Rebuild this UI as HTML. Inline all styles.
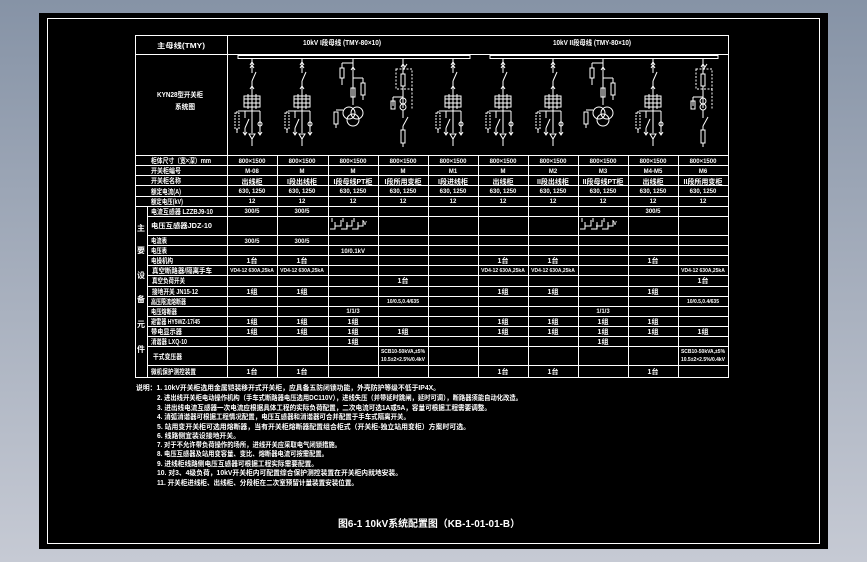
<!DOCTYPE html>
<html><head><meta charset="utf-8"><style>
html,body{margin:0;padding:0;width:867px;height:562px;overflow:hidden;background:linear-gradient(#8693a6,#c6cad4);}
svg{display:block}
text{font-family:"Liberation Sans","Noto Sans CJK SC",sans-serif;fill:#fff;font-weight:bold}
</style></head><body>
<svg width="867" height="562" viewBox="0 0 867 562" xmlns="http://www.w3.org/2000/svg">
<defs>
<g id="feeder" stroke="#fff" stroke-width="1" fill="none">
<line x1="0" y1="58" x2="0" y2="73"/>
<polyline points="-2,65 0,62 2,65"/>
<polyline points="-2,68 0,65 2,68"/>
<line x1="0" y1="81" x2="4" y2="72"/>
<line x1="0" y1="81" x2="0" y2="111"/>
<polyline points="-2,89 0,86 2,89"/>
<rect x="-8" y="96" width="16" height="11"/>
<line x1="-8" y1="99" x2="8" y2="99"/><line x1="-8" y1="103" x2="8" y2="103"/>
<line x1="-4" y1="94" x2="-4" y2="109"/><line x1="4" y1="94" x2="4" y2="109"/>
<line x1="-14" y1="111" x2="8" y2="111"/>
<rect x="-17" y="113" width="4" height="16" stroke-dasharray="2,1"/>
<line x1="-15" y1="111" x2="-15" y2="113"/>
<line x1="-7" y1="111" x2="-7" y2="118"/><line x1="-7" y1="128" x2="-3" y2="119"/><line x1="-7" y1="128" x2="-7" y2="134"/>
<polyline points="-9,132 -7,135 -5,132"/>
<line x1="8" y1="111" x2="8" y2="135"/><circle cx="8" cy="124" r="2"/>
<polyline points="6,132 8,135 10,132"/>
<line x1="0" y1="111" x2="0" y2="133"/>
<polygon points="-3,134 3,134 0,139"/>
<line x1="0" y1="139" x2="0" y2="146"/>
<polyline points="-15,129 -15,133"/>
</g>
<g id="pt" stroke="#fff" stroke-width="1" fill="none">
<line x1="0" y1="58" x2="0" y2="105"/>
<polyline points="-2,70 0,67 2,70"/>
<line x1="0" y1="63" x2="-11" y2="63"/><line x1="-11" y1="63" x2="-11" y2="68"/>
<rect x="-13" y="68" width="4" height="10"/><line x1="-11" y1="78" x2="-11" y2="85"/>
<line x1="0" y1="78" x2="10" y2="78"/><line x1="10" y1="78" x2="10" y2="83"/>
<rect x="8" y="83" width="4" height="12"/><line x1="10" y1="95" x2="10" y2="100"/>
<rect x="-2" y="88" width="4" height="9"/>
<circle cx="-4" cy="113" r="6"/><circle cx="4" cy="113" r="6"/><circle cx="0" cy="120" r="6"/>
<line x1="-10" y1="110" x2="-17" y2="110"/><rect x="-19" y="112" width="4" height="12"/><line x1="-17" y1="124" x2="-17" y2="128"/>
</g>
<g id="fuse" stroke="#fff" stroke-width="1" fill="none">
<line x1="0" y1="58" x2="0" y2="108"/>
<polyline points="-2,67 0,64 2,67"/>
<line x1="0" y1="70" x2="4" y2="64"/>
<rect x="-7" y="69" width="16" height="20" stroke-dasharray="2,1.5"/>
<rect x="-2" y="74" width="4" height="12" fill="#000"/>
<line x1="-10" y1="97" x2="0" y2="97"/><line x1="-10" y1="97" x2="-10" y2="106"/>
<rect x="-12" y="101" width="4" height="8"/>
<circle cx="0" cy="101" r="3"/><circle cx="0" cy="107" r="3"/>
<line x1="9" y1="89" x2="9" y2="110" stroke-dasharray="2,1.5"/>
<line x1="0" y1="110" x2="0" y2="118"/>
<line x1="0" y1="126" x2="5" y2="117"/>
<line x1="0" y1="126" x2="0" y2="130"/>
<rect x="-2" y="130" width="4" height="13"/>
<line x1="0" y1="143" x2="0" y2="147"/>
</g>
</defs>
<rect x="39" y="13" width="789" height="536" fill="#000"/>
<rect x="47.5" y="18.5" width="772" height="525" fill="none" stroke="#fff" stroke-width="1"/>
<g stroke="#fff" stroke-width="1" fill="none">
<rect x="135.5" y="35.5" width="593" height="342"/>
<line x1="135" y1="54.5" x2="728" y2="54.5"/>
<line x1="227.5" y1="35" x2="227.5" y2="377"/>
<line x1="147.5" y1="206" x2="147.5" y2="377"/>
<line x1="135" y1="155.5" x2="728" y2="155.5"/>
<line x1="135" y1="165.5" x2="728" y2="165.5"/>
<line x1="135" y1="175.5" x2="728" y2="175.5"/>
<line x1="135" y1="185.5" x2="728" y2="185.5"/>
<line x1="135" y1="196.5" x2="728" y2="196.5"/>
<line x1="135" y1="206.5" x2="728" y2="206.5"/>
<g>
<line x1="147" y1="216.5" x2="728" y2="216.5"/><line x1="147" y1="235.5" x2="728" y2="235.5"/>
<line x1="147" y1="245.5" x2="728" y2="245.5"/><line x1="147" y1="255.5" x2="728" y2="255.5"/>
<line x1="147" y1="265.5" x2="728" y2="265.5"/><line x1="147" y1="275.5" x2="728" y2="275.5"/>
<line x1="147" y1="286.5" x2="728" y2="286.5"/><line x1="147" y1="296.5" x2="728" y2="296.5"/>
<line x1="147" y1="306.5" x2="728" y2="306.5"/><line x1="147" y1="316.5" x2="728" y2="316.5"/>
<line x1="147" y1="326.5" x2="728" y2="326.5"/><line x1="147" y1="336.5" x2="728" y2="336.5"/>
<line x1="147" y1="346.5" x2="728" y2="346.5"/><line x1="147" y1="365.5" x2="728" y2="365.5"/>
</g>
<line x1="277.5" y1="155" x2="277.5" y2="377"/><line x1="328.5" y1="155" x2="328.5" y2="377"/>
<line x1="378.5" y1="155" x2="378.5" y2="377"/><line x1="428.5" y1="155" x2="428.5" y2="377"/>
<line x1="478.5" y1="155" x2="478.5" y2="377"/><line x1="528.5" y1="155" x2="528.5" y2="377"/>
<line x1="578.5" y1="155" x2="578.5" y2="377"/><line x1="628.5" y1="155" x2="628.5" y2="377"/>
<line x1="678.5" y1="155" x2="678.5" y2="377"/>
<path d="M238,55.5 H470 V58.5 H238 Z M490,55.5 H718 V58.5 H490 Z"/>
</g>
<use href="#feeder" x="252"/><use href="#feeder" x="302"/><use href="#pt" x="353"/><use href="#fuse" x="403"/>
<use href="#feeder" x="453"/><use href="#feeder" x="503"/><use href="#feeder" x="553"/><use href="#pt" x="603"/>
<use href="#feeder" x="653"/><use href="#fuse" x="703"/>
<g stroke="#fff" fill="none" stroke-width="1">
<path d="M330,229 h5 v-7 M335,226 h6 v-6 M341,229 h6 v-7 M346,226 h6 v-6 M352,229 h6 v-7 M358,226 h5 v-6 M332,222 v-4 M343,222 v-4 M354,222 v-4"/>
<path d="M580,229 h5 v-7 M585,226 h6 v-6 M591,229 h6 v-7 M596,226 h6 v-6 M602,229 h6 v-7 M608,226 h5 v-6 M582,222 v-4 M593,222 v-4 M604,222 v-4"/>
</g>
<g font-size="6" text-anchor="middle">
<text x="365" y="225" font-size="5">V</text><text x="615" y="225" font-size="5">V</text>
</g>
<g font-size="7">
<text x="157" y="48" textLength="48" lengthAdjust="spacingAndGlyphs">主母线(TMY)</text>
<text x="303" y="45" textLength="78" lengthAdjust="spacingAndGlyphs">10kV I段母线 (TMY-80×10)</text>
<text x="553" y="45" textLength="78" lengthAdjust="spacingAndGlyphs">10kV II段母线 (TMY-80×10)</text>
<text x="157" y="97" textLength="46" lengthAdjust="spacingAndGlyphs">KYN28型开关柜</text>
<text x="175" y="109" textLength="20" lengthAdjust="spacingAndGlyphs">系统图</text>
</g>
<g font-size="7">
<text x="151" y="163" textLength="60" lengthAdjust="spacingAndGlyphs">柜体尺寸（宽×深）mm</text>
<text x="151" y="173" textLength="30" lengthAdjust="spacingAndGlyphs">开关柜编号</text>
<text x="151" y="183" textLength="30" lengthAdjust="spacingAndGlyphs">开关柜名称</text>
<text x="151" y="194" textLength="30" lengthAdjust="spacingAndGlyphs">额定电流(A)</text>
<text x="151" y="204" textLength="32" lengthAdjust="spacingAndGlyphs">额定电压(kV)</text>
<text x="151" y="214" textLength="62" lengthAdjust="spacingAndGlyphs">电流互感器 LZZBJ9-10</text>
<text x="151" y="228" textLength="61" lengthAdjust="spacingAndGlyphs">电压互感器JDZ-10</text>
<text x="151" y="243" textLength="16" lengthAdjust="spacingAndGlyphs">电流表</text>
<text x="151" y="253" textLength="16" lengthAdjust="spacingAndGlyphs">电压表</text>
<text x="151" y="263" textLength="22" lengthAdjust="spacingAndGlyphs">电操机构</text>
<text x="152" y="273" textLength="60" lengthAdjust="spacingAndGlyphs">真空断路器/隔离手车</text>
<text x="152" y="283" textLength="33" lengthAdjust="spacingAndGlyphs">真空负荷开关</text>
<text x="152" y="294" textLength="46" lengthAdjust="spacingAndGlyphs">接地开关 JN15-12</text>
<text x="151" y="304" textLength="35" lengthAdjust="spacingAndGlyphs">高压限流熔断器</text>
<text x="151" y="314" textLength="26" lengthAdjust="spacingAndGlyphs">电压熔断器</text>
<text x="151" y="324" textLength="49" lengthAdjust="spacingAndGlyphs">避雷器 HY5WZ-17/45</text>
<text x="151" y="334" textLength="31" lengthAdjust="spacingAndGlyphs">带电显示器</text>
<text x="151" y="344" textLength="36" lengthAdjust="spacingAndGlyphs">消谐器 LXQ-10</text>
<text x="153" y="359" textLength="29" lengthAdjust="spacingAndGlyphs">干式变压器</text>
<text x="151" y="374" textLength="45" lengthAdjust="spacingAndGlyphs">微机保护测控装置</text>
</g>
<g font-size="8" text-anchor="middle">
<text x="141" y="231">主</text><text x="141" y="253">要</text><text x="141" y="278">设</text>
<text x="141" y="302">备</text><text x="141" y="327">元</text><text x="141" y="352">件</text>
</g>
<g font-size="6" text-anchor="middle">
<g>
<text x="252" y="163">800×1500</text><text x="302" y="163">800×1500</text><text x="353" y="163">800×1500</text><text x="403" y="163">800×1500</text><text x="453" y="163">800×1500</text>
<text x="503" y="163">800×1500</text><text x="553" y="163">800×1500</text><text x="603" y="163">800×1500</text><text x="653" y="163">800×1500</text><text x="703" y="163">800×1500</text>
</g>
<g>
<text x="252" y="173">M-08</text><text x="302" y="173">M</text><text x="353" y="173">M</text><text x="403" y="173">M</text><text x="453" y="173">M1</text>
<text x="503" y="173">M</text><text x="553" y="173">M2</text><text x="603" y="173">M3</text><text x="653" y="173">M4-M5</text><text x="703" y="173">M6</text>
</g>
<g font-size="7">
<text x="252" y="184">出线柜</text><text x="302" y="184">I段出线柜</text><text x="353" y="184">I段母线PT柜</text><text x="403" y="184">I段所用变柜</text><text x="453" y="184">I段进线柜</text>
<text x="503" y="184">出线柜</text><text x="553" y="184">II段出线柜</text><text x="603" y="184">II段母线PT柜</text><text x="653" y="184">出线柜</text><text x="703" y="184">II段所用变柜</text>
</g>
<g>
<text x="252" y="193">630, 1250</text><text x="302" y="193">630, 1250</text><text x="353" y="193">630, 1250</text><text x="403" y="193">630, 1250</text><text x="453" y="193">630, 1250</text>
<text x="503" y="193">630, 1250</text><text x="553" y="193">630, 1250</text><text x="603" y="193">630, 1250</text><text x="653" y="193">630, 1250</text><text x="703" y="193">630, 1250</text>
</g>
<g>
<text x="252" y="203">12</text><text x="302" y="203">12</text><text x="353" y="203">12</text><text x="403" y="203">12</text><text x="453" y="203">12</text>
<text x="503" y="203">12</text><text x="553" y="203">12</text><text x="603" y="203">12</text><text x="653" y="203">12</text><text x="703" y="203">12</text>
</g>
<text x="252" y="213">300/5</text><text x="302" y="213">300/5</text><text x="653" y="213">300/5</text>
<text x="252" y="243">300/5</text><text x="302" y="243">300/5</text>
<text x="353" y="253">10/0.1kV</text>
<g font-size="7"><text x="252" y="263">1台</text><text x="302" y="263">1台</text><text x="503" y="263">1台</text><text x="553" y="263">1台</text><text x="653" y="263">1台</text></g>
<g font-size="5">
<text x="252" y="272">VD4-12 630A,25kA</text><text x="302" y="272">VD4-12 630A,25kA</text>
<text x="503" y="272">VD4-12 630A,25kA</text><text x="553" y="272">VD4-12 630A,25kA</text><text x="703" y="272">VD4-12 630A,25kA</text>
</g>
<g font-size="7"><text x="403" y="283">1台</text><text x="703" y="283">1台</text>
<text x="252" y="294">1组</text><text x="302" y="294">1组</text><text x="503" y="294">1组</text><text x="553" y="294">1组</text><text x="653" y="294">1组</text></g>
<g font-size="5"><text x="403" y="303">10/0.5,0.4/635</text><text x="703" y="303">10/0.5,0.4/635</text></g>
<text x="353" y="313">1/1/3</text><text x="603" y="313">1/1/3</text>
<g font-size="7">
<text x="252" y="324">1组</text><text x="302" y="324">1组</text><text x="353" y="324">1组</text><text x="503" y="324">1组</text><text x="553" y="324">1组</text><text x="603" y="324">1组</text><text x="653" y="324">1组</text>
<text x="252" y="334">1组</text><text x="302" y="334">1组</text><text x="353" y="334">1组</text><text x="403" y="334">1组</text><text x="503" y="334">1组</text><text x="553" y="334">1组</text><text x="603" y="334">1组</text><text x="653" y="334">1组</text><text x="703" y="334">1组</text>
<text x="353" y="344">1组</text><text x="603" y="344">1组</text>
</g>
<g font-size="5">
<text x="403" y="353">SCB10-50kVA,±5%</text><text x="403" y="361">10.5±2×2.5%/0.4kV</text>
<text x="703" y="353">SCB10-50kVA,±5%</text><text x="703" y="361">10.5±2×2.5%/0.4kV</text>
</g>
<g font-size="7">
<text x="252" y="374">1台</text><text x="302" y="374">1台</text><text x="503" y="374">1台</text><text x="553" y="374">1台</text><text x="653" y="374">1台</text>
</g>
</g>
<g font-size="7">
<text x="136" y="390" textLength="304" lengthAdjust="spacingAndGlyphs">说明：1. 10kV开关柜选用金属铠装移开式开关柜，应具备五防闭锁功能，外壳防护等级不低于IP4X。</text>
<text x="157" y="400" textLength="365" lengthAdjust="spacingAndGlyphs">2. 进出线开关柜电动操作机构（手车式断路器电压选用DC110V），进线失压（并带延时跳闸，延时可调），断路器须能自动化改造。</text>
<text x="157" y="410" textLength="334" lengthAdjust="spacingAndGlyphs">3. 进出线电流互感器一次电流应根据具体工程的实际负荷配置，二次电流可选1A或5A，容量可根据工程需要调整。</text>
<text x="157" y="419" textLength="253" lengthAdjust="spacingAndGlyphs">4. 消弧消谐器可根据工程情况配置，电压互感器和消谐器可合并配置于手车式隔离开关。</text>
<text x="157" y="429" textLength="313" lengthAdjust="spacingAndGlyphs">5. 站用变开关柜可选用熔断器，当有开关柜熔断器配置组合柜式（开关柜-独立站用变柜）方案时可选。</text>
<text x="157" y="438" textLength="83" lengthAdjust="spacingAndGlyphs">6. 线路侧宜装设接地开关。</text>
<text x="157" y="447" textLength="184" lengthAdjust="spacingAndGlyphs">7. 对于不允许带负荷操作的场所，进线开关应采取电气闭锁措施。</text>
<text x="157" y="456" textLength="171" lengthAdjust="spacingAndGlyphs">8. 电压互感器及站用变容量、变比、熔断器电流可按需配置。</text>
<text x="157" y="466" textLength="161" lengthAdjust="spacingAndGlyphs">9. 进线柜线路侧电压互感器可根据工程实际需要配置。</text>
<text x="157" y="475" textLength="245" lengthAdjust="spacingAndGlyphs">10. 对3、4级负荷，10kV开关柜内可配置综合保护测控装置在开关柜内就地安装。</text>
<text x="157" y="485" textLength="201" lengthAdjust="spacingAndGlyphs">11. 开关柜进线柜、出线柜、分段柜在二次室预留计量装置安装位置。</text>
</g>
<text x="338" y="527" font-size="10" textLength="182" lengthAdjust="spacingAndGlyphs">图6-1  10kV系统配置图（KB-1-01-01-B）</text>
</svg>
</body></html>
